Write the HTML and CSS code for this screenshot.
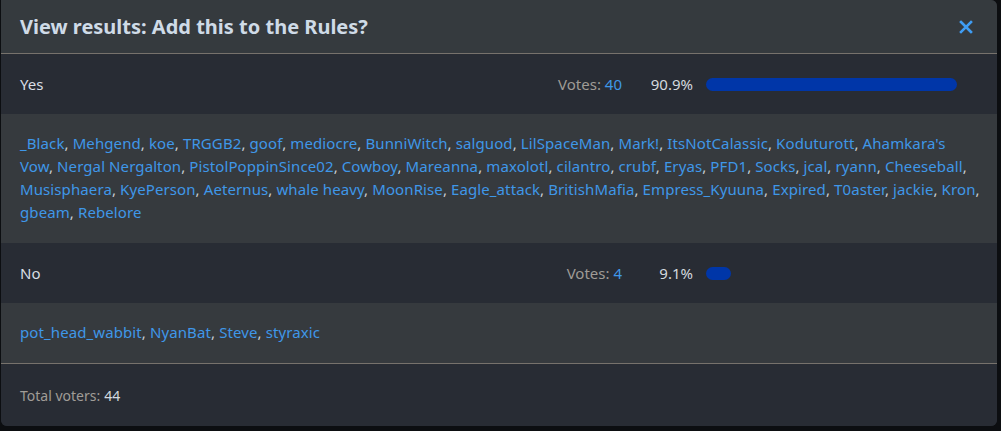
FILE: index.html
```html
<!DOCTYPE html>
<html>
<head>
<meta charset="utf-8">
<link rel="stylesheet" href="styles.css">
</head>
<body>
<div class="modal">
  <div class="modal-header">
    <h1 class="title">View results: Add this to the Rules?</h1>
    <button class="close" aria-label="Close">
      <svg width="14" height="14" viewBox="0 0 14 14"><path d="M2 2 L12 12 M12 2 L2 12" stroke="#3f9cf2" stroke-width="2.6" stroke-linecap="square"/></svg>
    </button>
  </div>
  <div class="option">
    <div class="opt-label">Yes</div>
    <div class="votes">Votes: <span class="count">40</span></div>
    <div class="pct">90.9%</div>
    <div class="bar-track"><div class="bar" style="width: 90.9%"></div></div>
  </div>
  <div class="voters">
    <a>_Black</a>, <a>Mehgend</a>, <a>koe</a>, <a>TRGGB2</a>, <a>goof</a>, <a>mediocre</a>, <a>BunniWitch</a>, <a>salguod</a>, <a>LilSpaceMan</a>, <a>Mark!</a>, <a>ItsNotCalassic</a>, <a>Koduturott</a>, <a>Ahamkara's Vow</a>, <a>Nergal Nergalton</a>, <a>PistolPoppinSince02</a>, <a>Cowboy</a>, <a>Mareanna</a>, <a>maxolotl</a>, <a>cilantro</a>, <a>crubf</a>, <a>Eryas</a>, <a>PFD1</a>, <a>Socks</a>, <a>jcal</a>, <a>ryann</a>, <a>Cheeseball</a>, <a>Musisphaera</a>, <a>KyePerson</a>, <a>Aeternus</a>, <a>whale heavy</a>, <a>MoonRise</a>, <a>Eagle_attack</a>, <a>BritishMafia</a>, <a>Empress_Kyuuna</a>, <a>Expired</a>, <a>T0aster</a>, <a>jackie</a>, <a>Kron</a>, <a>gbeam</a>, <a>Rebelore</a>
  </div>
  <div class="option">
    <div class="opt-label">No</div>
    <div class="votes">Votes: <span class="count">4</span></div>
    <div class="pct">9.1%</div>
    <div class="bar-track"><div class="bar" style="width: 9.1%"></div></div>
  </div>
  <div class="voters">
    <a>pot_head_wabbit</a>, <a>NyanBat</a>, <a>Steve</a>, <a>styraxic</a>
  </div>
  <div class="modal-footer">Total voters: <span class="total">44</span></div>
</div>
</body>
</html>
```

FILE: styles.css
```css
html, body {
  margin: 0;
  padding: 0;
  background: #0c0e11;
  height: 100%;
}
body {
  padding: 0 4px 0 1px;
  font-family: "Noto Sans", "Segoe UI", sans-serif;
}
.modal {
  background: #282c34;
  border-radius: 0 6px 6px 6px;
  overflow: hidden;
  width: 996px;
}
.modal-header {
  background: #353a3e;
  height: 53px;
  border-bottom: 1px solid #77726c;
  display: flex;
  align-items: center;
  padding: 0 20px 0 19px;
}
.title {
  flex: 1;
  margin: 0;
  font-size: 20px;
  font-weight: 700;
  color: #cfdbe7;
}
.close {
  background: none;
  border: 0;
  padding: 0;
  width: 14px;
  height: 14px;
  margin-right: 4px;
  display: flex;
}
.option {
  display: flex;
  align-items: center;
  height: 60px;
  padding: 0 15px 0 19px;
  font-size: 15px;
  background: #282c34;
}
.opt-label {
  flex: 1;
  color: #d8dee5;
}
.votes {
  color: #9f9b96;
  width: 110px;
  text-align: right;
}
.count {
  color: #3f97e8;
}
.pct {
  color: #d3d9df;
  width: 71px;
  text-align: right;
}
.bar-track {
  width: 276px;
  margin-left: 13px;
  height: 13px;
}
.bar {
  height: 13px;
  background: #0036a8;
  border-radius: 7px;
}
.voters {
  background: #363a3e;
  padding: 18px 16px 19px 19px;
  font-size: 15px;
  letter-spacing: 0.1px;
  line-height: 23px;
  color: #c7cdd3;
}
.voters a {
  color: #3f97e8;
}
.modal-footer {
  border-top: 1px solid #77726c;
  height: 62px;
  display: flex;
  align-items: center;
  padding: 0 19px;
  font-size: 14px;
  color: #a09c97;
  background: #282c34;
}
.total {
  color: #d3d9df;
  margin-left: 4px;
}
```
